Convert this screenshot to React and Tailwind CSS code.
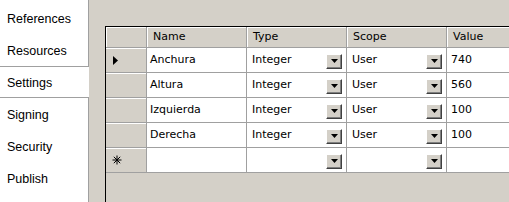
import React from "react";

const tabs = ["References", "Resources", "Settings", "Signing", "Security", "Publish"];

const rows = [
  { name: "Anchura", type: "Integer", scope: "User", value: "740", current: true },
  { name: "Altura", type: "Integer", scope: "User", value: "560" },
  { name: "Izquierda", type: "Integer", scope: "User", value: "100" },
  { name: "Derecha", type: "Integer", scope: "User", value: "100" },
];

const DropButton = () => (
  <span className="mt-[2px] flex h-[15px] w-[16px] shrink-0 items-center justify-center border border-t-white border-l-white border-r-[#404040] border-b-[#404040] bg-[#d4d0c8] shadow-[inset_-1px_-1px_0_#808080]">
    <svg width="7" height="4" viewBox="0 0 7 4">
      <path d="M0 0h7L3.5 4z" fill="#000" />
    </svg>
  </span>
);

const ComboCell = ({ text }) => (
  <div className="flex w-[100px] shrink-0 items-center justify-between border-r border-[#a0a0a0] bg-white pl-[5px] pr-[4px]">
    <span className="pt-px">{text}</span>
    <DropButton />
  </div>
);

const RowHeader = ({ children }) => (
  <div className="flex w-[41px] shrink-0 items-center border-r border-[#a0a0a0] bg-[#d4d0c8] pl-[7px] shadow-[inset_0_1px_0_#ffffff]">
    {children}
  </div>
);

export default function App() {
  return (
    <div className="flex h-[202px] w-[509px] overflow-hidden bg-[#d4d0c8] font-['DejaVu_Sans',sans-serif] text-[11px] text-black">
      <nav className="w-[89px] shrink-0 border-r border-[#a0a0a0] bg-white pt-[2px] font-['Liberation_Sans',sans-serif] text-[12.5px]">
        {tabs.map((t) => (
          <div
            key={t}
            className={
              t === "Settings"
                ? "relative -mr-px flex h-[32px] items-center border-y border-[#a0a0a0] bg-white pl-[7px] pt-[2px]"
                : "flex h-[32px] items-center pl-[7px] pt-[2px]"
            }
          >
            {t}
          </div>
        ))}
      </nav>

      <div className="flex-1 pl-[16px] pt-[26px]">
        <div className="h-full border-l border-t border-black">
          <div className="flex h-[21px] border-b border-[#a0a0a0] bg-[#d4d0c8]">
            <div className="w-[41px] shrink-0 border-r border-[#a0a0a0] shadow-[inset_1px_1px_0_#ffffff]" />
            {["Name", "Type", "Scope"].map((h) => (
              <div
                key={h}
                className="flex w-[100px] shrink-0 items-center border-r border-[#a0a0a0] pl-[6px] pt-px shadow-[inset_1px_1px_0_#ffffff]"
              >
                {h}
              </div>
            ))}
            <div className="flex flex-1 items-center pl-[6px] pt-px shadow-[inset_1px_1px_0_#ffffff]">Value</div>
          </div>

          {rows.map((r) => (
            <div key={r.name} className="flex h-[25px] border-b border-[#a0a0a0]">
              <RowHeader>
                {r.current && (
                  <svg width="5" height="9" viewBox="0 0 5 9">
                    <path d="M0 0l5 4.5L0 9z" fill="#000" />
                  </svg>
                )}
              </RowHeader>
              <div className="flex w-[100px] shrink-0 items-center border-r border-[#a0a0a0] bg-white pl-[3px] pt-px">
                {r.name}
              </div>
              <ComboCell text={r.type} />
              <ComboCell text={r.scope} />
              <div className="flex flex-1 items-center bg-white pl-[4px] pt-px">{r.value}</div>
            </div>
          ))}

          <div className="flex h-[25px] border-b border-[#a0a0a0]">
            <RowHeader>
              <svg width="10" height="10" viewBox="0 0 10 10" className="ml-[-1px]">
                <path d="M5 0.5v9M0.5 5h9M1.8 1.8l6.4 6.4M8.2 1.8l-6.4 6.4" stroke="#000" strokeWidth="1" />
              </svg>
            </RowHeader>
            <div className="w-[100px] shrink-0 border-r border-[#a0a0a0] bg-white" />
            <ComboCell text="" />
            <ComboCell text="" />
            <div className="flex-1 bg-white" />
          </div>
        </div>
      </div>
    </div>
  );
}
